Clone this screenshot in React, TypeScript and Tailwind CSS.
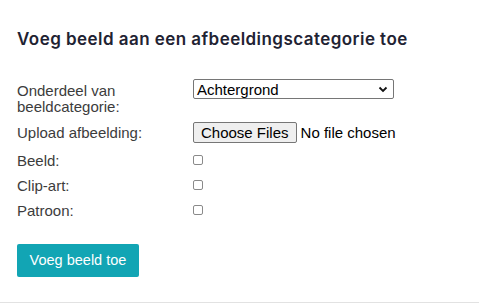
export default function App() {
  const checks = ["Beeld:", "Clip-art:", "Patroon:"];
  return (
    <div className="w-[479px] h-[303px] bg-white border-b border-[#e2e2e2] px-[17px] pt-[28px]" style={{ fontFamily: "'Liberation Sans', Arial, sans-serif" }}>
      <h2 className="text-[17px] font-semibold text-[#1f2333] leading-[22px] tracking-[0.45px]" style={{ fontFamily: "Inter, 'Noto Sans', sans-serif" }}>
        Voeg beeld aan een afbeeldingscategorie toe
      </h2>

      <div className="mt-[29px] grid grid-cols-[176px_1fr] text-[15px] text-[#3c3c3c] leading-[15px]">
        <label className="pt-[4px] h-[43px] leading-[16px]">
          Onderdeel van
          <br />
          beeldcategorie:
        </label>
        <div>
          <div className="w-[201px] h-[20px] border border-[#767676] rounded-[2px] flex items-center justify-between pl-[3px] pr-[5px] text-black text-[15px]">
            <span>Achtergrond</span>
            <svg width="10" height="7" viewBox="0 0 10 7">
              <path d="M1.5 1.5 L5 5 L8.5 1.5" fill="none" stroke="#111" strokeWidth="1.8" />
            </svg>
          </div>
        </div>

        <label className="h-[27px] pt-[3px]">Upload afbeelding:</label>
        <div className="flex items-start text-black">
          <div className="h-[21px] px-[7px] border border-[#767676] rounded-[2px] bg-[#efefef] flex items-center text-[15px]">
            Choose Files
          </div>
          <span className="ml-[4px] pt-[3px]">No file chosen</span>
        </div>

        {checks.map((c) => (
          <div key={c} className="contents">
            <label className="h-[25px] pt-[4px]">{c}</label>
            <div className="pt-[6px]">
              <div className="w-[10px] h-[10px] border border-[#8a8a8a] rounded-[2px] bg-white" />
            </div>
          </div>
        ))}
      </div>

      <button className="mt-[20px] w-[122px] h-[33px] bg-[#12a5b4] rounded-[2px] text-white text-[14.5px]" style={{ fontFamily: "'Liberation Sans', Arial, sans-serif" }}>
        Voeg beeld toe
      </button>
    </div>
  );
}
